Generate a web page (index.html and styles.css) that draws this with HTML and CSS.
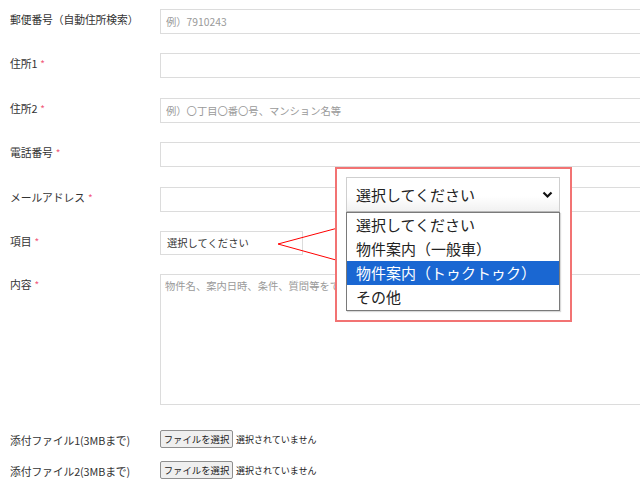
FILE: index.html
```html
<!DOCTYPE html>
<html lang="ja">
<head>
<meta charset="utf-8">
<title>お問い合わせ</title>
<link rel="stylesheet" href="styles.css">
</head>
<body>
<form class="form">
  <div class="row">
    <label class="label">郵便番号（自動住所検索）</label>
    <div class="field"><input class="input" type="text" placeholder="例）7910243"></div>
  </div>
  <div class="row">
    <label class="label">住所1<span class="req">*</span></label>
    <div class="field"><input class="input" type="text"></div>
  </div>
  <div class="row">
    <label class="label">住所2<span class="req">*</span></label>
    <div class="field"><input class="input" type="text" placeholder="例）〇丁目〇番〇号、マンション名等"></div>
  </div>
  <div class="row">
    <label class="label">電話番号<span class="req">*</span></label>
    <div class="field"><input class="input" type="text"></div>
  </div>
  <div class="row">
    <label class="label">メールアドレス<span class="req">*</span></label>
    <div class="field"><input class="input" type="text"></div>
  </div>
  <div class="row">
    <label class="label">項目<span class="req">*</span></label>
    <div class="field"><div class="select-small">選択してください</div></div>
  </div>
  <div class="row row-area">
    <label class="label">内容<span class="req">*</span></label>
    <div class="field"><textarea class="textarea" placeholder="物件名、案内日時、条件、質問等をできるだけ詳しくご記入ください"></textarea></div>
  </div>
  <div class="row row-file">
    <label class="label">添付ファイル1(3MBまで)</label>
    <div class="file"><span class="file-btn">ファイルを選択</span><span class="file-name">選択されていません</span></div>
  </div>
  <div class="row row-file">
    <label class="label">添付ファイル2(3MBまで)</label>
    <div class="file"><span class="file-btn">ファイルを選択</span><span class="file-name">選択されていません</span></div>
  </div>
</form>

<svg class="pointer" width="62" height="40" viewBox="0 0 62 40" aria-hidden="true">
  <polyline points="59,2.5 1,18 59,34" fill="none" stroke="#ff0000" stroke-width="1"/>
</svg>

<div class="callout">
  <div class="big-select">
    <span>選択してください</span>
    <svg class="chev" width="11" height="8" viewBox="0 0 11 8" aria-hidden="true">
      <polyline points="1.5,1.5 5.5,5.5 9.5,1.5" fill="none" stroke="#111" stroke-width="2.2"/>
    </svg>
  </div>
  <ul class="options">
    <li class="opt">選択してください</li>
    <li class="opt">物件案内（一般車）</li>
    <li class="opt opt-active">物件案内（トゥクトゥク）</li>
    <li class="opt">その他</li>
  </ul>
</div>
</body>
</html>
```

FILE: styles.css
```css
html, body {
  margin: 0;
  padding: 0;
  background: #ffffff;
  overflow: hidden;
}

body {
  width: 640px;
  height: 480px;
  position: relative;
  font-family: "Noto Sans CJK JP", "Noto Sans", sans-serif;
  color: #333333;
}

.form {
  width: 640px;
  padding-top: 9px;
}

.row {
  display: flex;
  align-items: flex-start;
  margin-bottom: 19.4px;
}

.label {
  width: 150px;
  flex: none;
  padding-left: 10px;
  padding-top: 2px;
  font-size: 10.8px;
  line-height: 16px;
  color: #333333;
  letter-spacing: -0.1px;
}

.req {
  color: #f25a7c;
  margin-left: 3px;
  font-size: 10px;
}

.field {
  flex: 1;
}

.input {
  display: block;
  box-sizing: border-box;
  width: 100%;
  height: 25px;
  margin: 0;
  padding: 0 6px 0 5px;
  border: 1px solid #dcdcdc;
  border-right: 0;
  border-radius: 0;
  font-family: inherit;
  font-size: 10.3px;
  color: #333333;
  background: #ffffff;
  outline: none;
}

.input::placeholder,
.textarea::placeholder {
  color: #9a9a9a;
}

.select-small {
  box-sizing: border-box;
  width: 143px;
  height: 24px;
  border: 1px solid #dcdcdc;
  padding-left: 6px;
  font-size: 10.3px;
  line-height: 22px;
  color: #333333;
  background: #ffffff;
}

.row-area {
  margin-bottom: 25px;
}

.textarea {
  display: block;
  box-sizing: border-box;
  width: 100%;
  height: 131px;
  margin: 0;
  padding: 3px 4px;
  border: 1px solid #dcdcdc;
  border-right: 0;
  resize: none;
  font-family: inherit;
  font-size: 10.3px;
  line-height: 16px;
  color: #333333;
  outline: none;
}

.row-file {
  align-items: center;
  margin-bottom: 13px;
}

.row-file .label {
  padding-top: 1px;
}

.file {
  display: flex;
  align-items: center;
}

.file-btn {
  box-sizing: border-box;
  height: 18px;
  width: 73px;
  display: flex;
  align-items: center;
  justify-content: center;
  border: 1px solid #8f8f8f;
  border-radius: 2px;
  background: #efefef;
  font-size: 9.4px;
  color: #222222;
}

.file-name {
  margin-left: 3px;
  font-size: 9px;
  color: #222222;
}

.pointer {
  position: absolute;
  left: 277px;
  top: 226px;
}

.callout {
  position: absolute;
  left: 335px;
  top: 167px;
  width: 237px;
  height: 155px;
  box-sizing: border-box;
  border: 2px solid #f27373;
  background: #ffffff;
  padding: 8px 0 0 9px;
}

.big-select {
  box-sizing: border-box;
  width: 214px;
  height: 35px;
  display: flex;
  align-items: center;
  justify-content: space-between;
  padding: 0 6px 0 9px;
  border: 1px solid #cfcfcf;
  border-bottom-color: #b8b8b8;
  background: linear-gradient(#ffffff 55%, #f1f1f1);
  font-size: 15px;
  color: #222222;
}

.chev {
  display: block;
}

.options {
  list-style: none;
  margin: 0;
  padding: 0;
  box-sizing: border-box;
  width: 214px;
  height: 99px;
  border: 1px solid #7a7a7a;
  box-shadow: 1px 1px 1px rgba(0, 0, 0, 0.15);
  background: #ffffff;
}

.opt {
  height: 24px;
  line-height: 24px;
  padding-left: 9px;
  font-size: 15px;
  color: #222222;
}

.opt-active {
  background: #1a67d2;
  color: #ffffff;
}
```
